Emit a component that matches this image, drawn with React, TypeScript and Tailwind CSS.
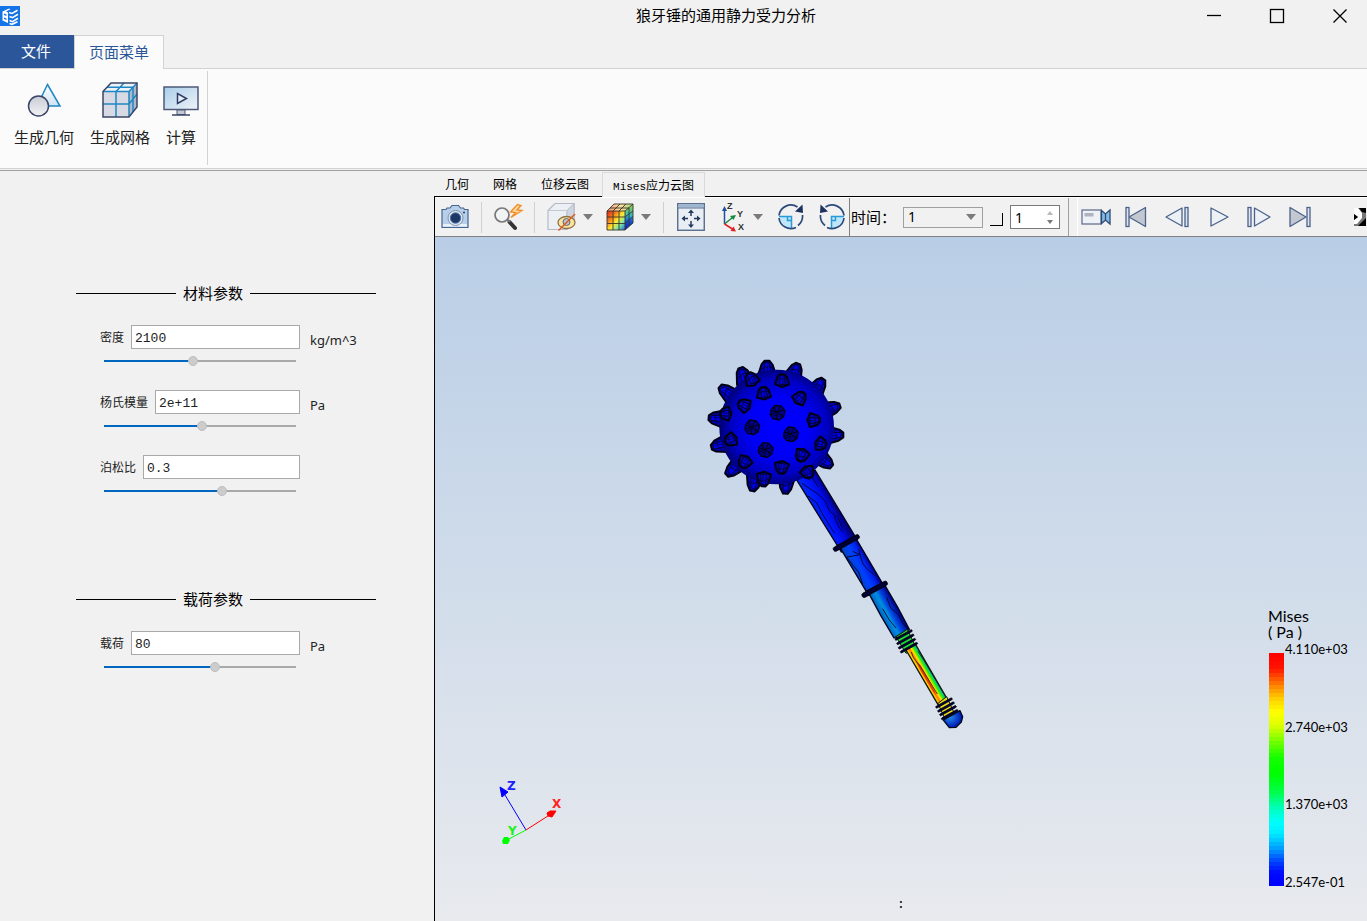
import { useState } from "react";
import type { CSSProperties, ReactNode } from "react";

const SANS = "font-['Noto_Sans','Noto_Sans_CJK_SC',sans-serif]";

type Field = { id: string; label: string; value: string; unit: string; level: number };

const materialFields: Field[] = [
  { id: "density", label: "密度", value: "2100", unit: "kg/m^3", level: 46 },
  { id: "young", label: "杨氏模量", value: "2e+11", unit: "Pa", level: 51 },
  { id: "poisson", label: "泊松比", value: "0.3", unit: "", level: 62 },
];

const loadFields: Field[] = [
  { id: "load", label: "载荷", value: "80", unit: "Pa", level: 58 },
];

// colour stops of the stress map, top (max) to bottom (min)
const stops: [number, number[]][] = [
  [0, [255, 0, 0]],
  [0.06, [255, 20, 0]],
  [0.13, [255, 125, 0]],
  [0.19, [255, 205, 0]],
  [0.25, [255, 255, 0]],
  [0.31, [220, 255, 0]],
  [0.37, [130, 255, 0]],
  [0.45, [20, 255, 0]],
  [0.52, [0, 255, 0]],
  [0.6, [0, 255, 80]],
  [0.67, [0, 255, 190]],
  [0.73, [0, 255, 255]],
  [0.78, [0, 235, 255]],
  [0.85, [0, 150, 255]],
  [0.9, [0, 70, 255]],
  [0.95, [0, 10, 255]],
  [1, [0, 0, 255]],
];

function colorAt(t: number) {
  const i = Math.max(1, stops.findIndex(([p]) => p >= t));
  const [p0, c0] = stops[i - 1];
  const [p1, c1] = stops[i];
  const k = (t - p0) / (p1 - p0);
  return `rgb(${c0.map((c, n) => Math.round(c + (c1[n] - c) * k)).join(",")})`;
}

const bands = Array.from({ length: 58 }, (_, i) => colorAt(i / 57));

function SectionTitle({ children }: { children: ReactNode }) {
  return (
    <h2 className="flex items-center gap-[7px] h-6 text-[15px] leading-6 text-black">
      <span className="w-[100px] h-px bg-black" />
      {children}
      <span className="flex-1 h-px bg-black" />
    </h2>
  );
}

function ParamField({ field }: { field: Field }) {
  const [level, setLevel] = useState(field.level);
  const track: CSSProperties = {
    backgroundImage: `linear-gradient(to right, #0067c0 ${level}%, #a9a9a9 ${level}%)`,
  };

  return (
    <div className="flex items-start gap-[10px] pl-6">
      <div className="w-[200px]">
        <div className="flex items-center gap-[7px] h-6">
          <label htmlFor={field.id} className="pt-[2px] text-xs text-[#222]">
            {field.label}
          </label>
          <input
            id={field.id}
            defaultValue={field.value}
            className="flex-1 min-w-0 h-6 px-[3px] pt-[2px] border border-[#a9a9a9] bg-white font-['Liberation_Mono',monospace] text-[13px] text-[#222] outline-none"
          />
        </div>
        <input
          type="range"
          aria-label={field.label}
          value={level}
          onChange={(e) => setLevel(Number(e.target.value))}
          style={track}
          className="block w-48 h-[10px] mt-[7px] ml-1 appearance-none bg-transparent bg-[length:100%_2px] bg-center bg-no-repeat [&::-webkit-slider-thumb]:appearance-none [&::-webkit-slider-thumb]:size-[10px] [&::-webkit-slider-thumb]:rounded-full [&::-webkit-slider-thumb]:bg-[#cccccc] [&::-webkit-slider-thumb]:border [&::-webkit-slider-thumb]:border-[#bdbdbd]"
        />
      </div>
      <span className="mt-[5px] text-[13px] leading-5 text-[#222]">{field.unit}</span>
    </div>
  );
}

function Logo() {
  return (
    <svg width="20" height="20" viewBox="0 0 20 20">
      <rect width="20" height="20" fill="#1473e6" />
      <path d="M2.500 5.500 9 2.500l1.500.8L6 5.500l2 1v10.500l-5.500-2.500Z" fill="#fff" />
      <path d="m4 7.500 2.500 1v1.500L4 9ZM4 11.500l2.500 1V14L4 13Z" fill="#1473e6" />
      <path d="M9 6.500l3 1 5.500-3.200M9.500 10.500l3 1.200L18 8.300M9.500 14.500l3 1.200 5.500-3.400M9.500 17.500l2.500.8 5.500-2.500" fill="none" stroke="#fff" strokeWidth="1.600" />
    </svg>
  );
}

function GeometryIcon() {
  return (
    <svg width="36" height="36" viewBox="0 0 36 36" className="shrink-0">
      <defs>
        <linearGradient id="geoBlue" x1="0" y1="0" x2="0" y2="1">
          <stop offset="0" stopColor="#fff" />
          <stop offset="1" stopColor="#cfe3f5" />
        </linearGradient>
        <linearGradient id="geoGrey" x1="0" y1="0" x2="0" y2="1">
          <stop offset="0" stopColor="#c9ccd6" />
          <stop offset="1" stopColor="#f2f2f4" />
        </linearGradient>
      </defs>
      <path d="M21.500 2.500 34 24H11Z" fill="url(#geoBlue)" stroke="#1f86c4" strokeWidth="1.500" />
      <circle cx="12.500" cy="24" r="10" fill="url(#geoGrey)" stroke="#3b4568" strokeWidth="1.500" />
    </svg>
  );
}

function MeshIcon() {
  return (
    <svg width="36" height="36" viewBox="0 0 36 36" className="shrink-0">
      <path d="M1 9.500h26V35H1Z" fill="#d7dae2" />
      <path d="M27 9.500 35 1v24l-8 10Z" fill="#aeb9cc" />
      <path d="M1 9.500 9 1h26l-8 8.500Z" fill="#eef3f8" />
      <g fill="none" stroke="#1f86c4" strokeWidth="1.500">
        <path d="M14 35V9.500L22 1M1 22h26l8-10M5 5.200h26V30M27 9.500V35" />
        <path d="M1 9.500h26L35 1" />
      </g>
      <path d="M1 9.500 9 1h26v24l-8 10H1Z" fill="none" stroke="#3b4568" strokeWidth="1.500" />
    </svg>
  );
}

function ComputeIcon() {
  return (
    <svg width="36" height="36" viewBox="0 0 36 36" className="shrink-0">
      <defs>
        <linearGradient id="screen" x1="0" y1="0" x2="1" y2="1">
          <stop offset="0" stopColor="#a9cdea" />
          <stop offset="1" stopColor="#f0f4f8" />
        </linearGradient>
      </defs>
      <rect x="1" y="5" width="34" height="22.500" fill="url(#screen)" stroke="#4d5a78" strokeWidth="1.500" />
      <path d="M14 28h8v4.500h-8Z" fill="#c3c8d2" stroke="#4d5a78" />
      <path d="M9 33h18" stroke="#3b4568" strokeWidth="1.500" />
      <path d="M14.500 11.500v10L23.500 16.500Z" fill="#e5edf5" stroke="#2f3c63" strokeWidth="1.500" />
    </svg>
  );
}

function RibbonButton({ label, width, children }: { label: string; width: string; children: ReactNode }) {
  return (
    <button type="button" className={`flex flex-col items-center ${width}`}>
      {children}
      <span className="mt-[7px] text-[15px] leading-6 whitespace-nowrap">{label}</span>
    </button>
  );
}

function CameraIcon() {
  return (
    <svg width="28" height="26" viewBox="0 0 28 26">
      <path d="M1 5.500h4l1-1.500h3l2-2.500h6.500L19.500 4h3l1 1.500H27v18H1Z" fill="#b7cfe8" stroke="#47658f" strokeWidth="1.200" />
      <path d="M2 20h24v2.500H2Z" fill="#e8f0f8" />
      <circle cx="14.500" cy="14" r="7.500" fill="#dfe8f2" stroke="#8094b0" />
      <circle cx="14.500" cy="14" r="5.200" fill="#1c3866" stroke="#4b74a8" />
      <circle cx="23" cy="8.500" r="1" fill="#24406e" />
    </svg>
  );
}

function ZoomFlashIcon() {
  return (
    <svg width="30" height="28" viewBox="0 0 30 28">
      <path d="m15.500 19 5.500 6" stroke="#333" strokeWidth="4" strokeLinecap="round" />
      <path d="m13 16 3 3" stroke="#777" strokeWidth="2" />
      <circle cx="8" cy="12" r="7" fill="#f2f3f5" stroke="#777" strokeWidth="1.700" />
      <path d="m23.500 1.500-7 7.500 5 .5-4.500 5 11-7-5-.500 4-4.500Z" fill="#ffd9a0" stroke="#f0902c" strokeWidth="1.400" />
    </svg>
  );
}

function HideCubeIcon() {
  return (
    <svg width="29" height="30" viewBox="0 0 29 30">
      <path d="M1 8.500 8 1.500h19v18l-7 8H1Z" fill="#eceff4" stroke="#b4bac6" strokeWidth="1.200" />
      <path d="M20 8.500 27 1.500v18l-7 8Z" fill="#cfd5df" stroke="#b4bac6" />
      <path d="M1 8.500h19v19" fill="none" stroke="#c3c9d4" />
      <ellipse cx="19.500" cy="20.500" rx="8.500" ry="6" fill="#fbe3a2" stroke="#8d7440" strokeWidth="1.300" />
      <circle cx="19.500" cy="20" r="3.500" fill="#b9c3d2" stroke="#666" />
      <path d="M11.500 28.500 28 12" stroke="#e0561f" strokeWidth="1.500" />
    </svg>
  );
}

function ColorCubeIcon() {
  return (
    <svg width="28" height="28" viewBox="0 0 28 28">
      <defs>
        <linearGradient id="cubeFront" x1="0" y1=".1" x2="1" y2="1">
          <stop offset="0" stopColor="#e0301a" />
          <stop offset=".25" stopColor="#f37a1f" />
          <stop offset=".5" stopColor="#ffe92e" />
          <stop offset=".72" stopColor="#7fe8a0" />
          <stop offset="1" stopColor="#1464e0" />
        </linearGradient>
        <linearGradient id="cubeSide" x1="0" y1="0" x2="0" y2="1">
          <stop offset=".1" stopColor="#7fd050" />
          <stop offset=".45" stopColor="#30b8c8" />
          <stop offset=".65" stopColor="#1258e0" />
          <stop offset="1" stopColor="#0818b0" />
        </linearGradient>
        <linearGradient id="cubeTop" x1="0" y1="0" x2="1" y2="0">
          <stop offset="0" stopColor="#f09070" />
          <stop offset=".5" stopColor="#fde0a0" />
          <stop offset="1" stopColor="#a0d880" />
        </linearGradient>
      </defs>
      <path d="M1 8h18v19H1Z" fill="url(#cubeFront)" />
      <path d="m19 8 8-7v19l-8 7Z" fill="url(#cubeSide)" />
      <path d="M1 8 8 1h19l-8 7Z" fill="url(#cubeTop)" />
      <g fill="none" stroke="#3a3428" strokeWidth=".9">
        <path d="M1 8 8 1h19v19l-8 7H1ZM1 8h18l8-7M19 8v19M7 27V8l7-7M13 27V8l7-7M4 5h19v18M1 14h18l8-6M1 20.500h18l8-7" />
      </g>
    </svg>
  );
}

function FitIcon() {
  return (
    <svg width="28" height="28" viewBox="0 0 28 28">
      <rect x=".7" y=".7" width="26.600" height="26.600" fill="#e9eef4" stroke="#5b718f" strokeWidth="1.500" />
      <rect x="1.500" y="1.500" width="25" height="3" fill="#9db6d2" />
      <path d="M1 5h26" stroke="#5b718f" />
      <path d="M14 9v4M14 18v4M6 15.500h5M17 15.500h5" stroke="#24395e" strokeWidth="1.500" />
      <path d="m14 6.500 3 3.500h-6ZM14 25l3-3.500h-6ZM4.500 15.500l3.500-3v6ZM23.500 15.500l-3.500-3v6Z" fill="#24395e" />
    </svg>
  );
}

function AxesIcon() {
  return (
    <svg width="24" height="30" viewBox="0 0 24 30" className="font-['Liberation_Sans',sans-serif] text-[9px] font-bold">
      <path d="M2.500 22V7" stroke="#1f4fa0" strokeWidth="1.500" />
      <path d="m2.500 4 2.500 5H0Z" fill="#1f4fa0" />
      <path d="m2.500 22 8-6.500" stroke="#168a3c" strokeWidth="1.500" />
      <path d="M14 13l-2.500 5-3.500-4Z" fill="#168a3c" />
      <path d="m2.500 22 8 5" stroke="#e02020" strokeWidth="1.500" />
      <path d="m14 29.500-5.500-.5 3-4.500Z" fill="#e02020" />
      <text x="5" y="7" fill="#333">Z</text>
      <text x="15" y="15" fill="#333">Y</text>
      <text x="16" y="28" fill="#333">X</text>
    </svg>
  );
}

function RotateIcon({ flip = false }: { flip?: boolean }) {
  return (
    <svg width="26" height="28" viewBox="0 0 26 28">
      <g transform={flip ? "translate(26 0) scale(-1 1)" : undefined}>
        <path d="M1.500 13.500h12v12Q3 24.500 1.500 13.500Z" fill="#bfe6fb" />
        <path d="M1 13.500h12.500V26M9.500 14v3.500h4" fill="none" stroke="#2a9bd8" strokeWidth="1.500" />
        <path d="M1 12.500A12 12 0 0 1 19.500 4M24.500 12A12 12 0 0 1 20 22.500M18 24.500A12 12 0 0 1 1 15" fill="none" stroke="#2c4a7c" strokeWidth="1.700" />
        <path d="m24.500 1.500.500 8.500-8-1.500Z" fill="#1d325e" />
      </g>
    </svg>
  );
}

function VideoIcon() {
  return (
    <svg width="30" height="20" viewBox="0 0 30 20">
      <rect x="1" y="3" width="19" height="14" fill="#eef1f5" stroke="#5a6a88" strokeWidth="1.200" />
      <rect x="3.500" y="6" width="9" height="3.500" fill="#aeb4be" />
      <path d="m20.500 3.500 4 3.500 4.500-4v14l-4.500-4-4 3.500Z" fill="#7fbde6" stroke="#2e4a74" strokeWidth="1.300" />
      <path d="M24.500 7v6" stroke="#2e4a74" strokeWidth="1.300" />
    </svg>
  );
}

function PlayIcon({ d, bar, solid = false }: { d: string; bar?: number; solid?: boolean }) {
  return (
    <svg width="24" height="22" viewBox="0 0 24 22">
      <path d={d} fill={solid ? "#c3c7cf" : "#edf1f6"} stroke="#4a628c" strokeWidth="1.300" strokeLinejoin="round" />
      {bar !== undefined && (
        <rect x={bar} y="1.500" width="3" height="19" fill="#dfe4eb" stroke="#4a628c" strokeWidth="1.300" />
      )}
    </svg>
  );
}

function Caret() {
  return (
    <svg width="10" height="6" viewBox="0 0 10 6" className="ml-[7px]">
      <path d="M0 0h10L5 6Z" fill="#7b7b7b" />
    </svg>
  );
}

function Tool({ label, className = "", children }: { label: string; className?: string; children: ReactNode }) {
  return (
    <button type="button" aria-label={label} className={`flex items-center shrink-0 ${className}`}>
      {children}
    </button>
  );
}

const Divider = () => <span className="w-px h-[31px] mx-3 bg-[#d0d0d0]" />;

function Toolbar() {
  return (
    <div className="flex h-10 border-t border-white border-b border-b-[#808080] bg-[#f1f1f1]">
      <div className="flex items-center shrink-0 pl-[6px] pr-1 border-r border-[#808080]">
        <Tool label="截图"><CameraIcon /></Tool>
        <Divider />
        <Tool label="缩放"><ZoomFlashIcon /></Tool>
        <span className="w-px h-[31px] mr-3 ml-[10px] bg-[#d0d0d0]" />
        <Tool label="隐藏"><HideCubeIcon /><Caret /></Tool>
        <Tool label="云图" className="ml-[13px]"><ColorCubeIcon /><Caret /></Tool>
        <Divider />
        <Tool label="适应窗口" className="ml-px"><FitIcon /></Tool>
        <Tool label="视图方向" className="ml-[17px]"><AxesIcon /><Caret /></Tool>
        <Tool label="顺时针旋转" className="ml-[15px]"><RotateIcon /></Tool>
        <Tool label="逆时针旋转" className="ml-[15px]"><RotateIcon flip /></Tool>
      </div>
      <div className="flex items-center shrink-0 pl-px pr-2 border-r border-[#a0a0a0]">
        <label htmlFor="time" className="w-[52px] text-[15px] whitespace-nowrap text-black">
          时间：
        </label>
        <div className="relative w-20">
          <select id="time" className="block w-full h-[21px] px-1 appearance-none border border-[#a0a0a0] bg-[#f1f1f1] text-sm leading-4 text-black">
            <option>1</option>
          </select>
          <svg width="10" height="6" viewBox="0 0 10 6" className="absolute right-[7px] top-[7px] pointer-events-none">
            <path d="M0 0h10L5 6Z" fill="#7b7b7b" />
          </svg>
        </div>
        <button type="button" aria-label="应用" className="size-[13px] mx-[7px] mt-1 border-r border-b border-black bg-[#f1f1f1]" />
        <div className="relative w-[50px]">
          <input aria-label="帧" defaultValue="1" className="block w-full h-6 px-1 border border-[#7a7a7a] bg-white text-sm text-black outline-none" />
          <button type="button" aria-label="增加" className="absolute right-[7px] top-[6px]">
            <svg width="6" height="4" viewBox="0 0 6 4"><path d="M0 4h6L3 0Z" fill="#b8b8b8" /></svg>
          </button>
          <button type="button" aria-label="减少" className="absolute right-[7px] bottom-[5px]">
            <svg width="6" height="4" viewBox="0 0 6 4"><path d="M0 0h6L3 4Z" fill="#777" /></svg>
          </button>
        </div>
      </div>
      <div className="flex flex-1 items-center min-w-0 ml-2 pl-[3px] gap-[17px] border-l border-white overflow-hidden">
        <Tool label="录制"><VideoIcon /></Tool>
        <Tool label="首帧" className="-ml-1"><PlayIcon d="M21.500 1.500v19L5 11Z" bar={2} solid /></Tool>
        <Tool label="上一帧"><PlayIcon d="M17 2v18L1 11Z" bar={20} /></Tool>
        <Tool label="播放"><PlayIcon d="M5 2v18l17-9Z" /></Tool>
        <Tool label="下一帧"><PlayIcon d="M7.500 2v18l15.500-9Z" bar={1} /></Tool>
        <Tool label="末帧"><PlayIcon d="M2 1.500v19L18 11Z" bar={19} solid /></Tool>
        <Tool label="更多" className="ml-auto mr-px">
          <svg width="12" height="18" viewBox="0 0 12 18">
            <rect width="12" height="18" fill="#777" />
            <path d="M0 0h4l4 5v5l-5 6H0v-4l4-3-4-3Z" fill="#fff" />
            <path d="M5 0h7v5L8 4ZM0 6l4 3-4 3ZM12 10v8H4Z" fill="#000" />
          </svg>
        </Tool>
      </div>
    </div>
  );
}

// spikes seen from the side: base x, base y, tip x, tip y
const sideSpikes = [
  [231, 88, 231, 47], [308, 96, 324, 56], [166, 112, 152, 68], [372, 144, 400, 102],
  [130, 158, 90, 124], [398, 198, 450, 182], [100, 222, 56, 218], [412, 270, 460, 270],
  [108, 296, 64, 307], [382, 330, 425, 365], [156, 348, 110, 390], [196, 386, 187, 438],
  [291, 390, 286, 446],
];

// spikes leaning towards the viewer
const slantSpikes = [
  [190, 114, 176, 84], [276, 118, 277, 88], [116, 206, 90, 206], [222, 388, 220, 424],
  [348, 372, 362, 398], [276, 356, 273, 386], [132, 280, 106, 292], [384, 294, 408, 302],
  [170, 342, 154, 366], [222, 156, 220, 126], [322, 168, 342, 144], [172, 186, 146, 172],
  [360, 225, 390, 226], [340, 320, 328, 348],
];

const frontSpikes = [[263, 203], [187, 247], [303, 268], [227, 315]];

function Spike({ p, base, tip }: { p: number[]; base: number; tip: number }) {
  const [bx, by, tx, ty] = p;
  const len = Math.hypot(tx - bx, ty - by);
  const ux = (tx - bx) / len;
  const uy = (ty - by) / len;
  // point at distance `along` from the base and `side` off the axis
  const at = (along: number, side: number) => `${bx + ux * along - uy * side},${by + uy * along + ux * side}`;
  return (
    <g stroke="#000010" strokeLinejoin="round">
      <polygon
        points={[at(0, base), at(len * 0.7, tip + 3), at(len, tip / 2), at(len, -tip / 2), at(len * 0.75, -tip - 2), at(0, -base), at(-8, 0)].join(" ")}
        fill="#0000b8"
        strokeWidth="6"
      />
      <path d={`M${at(0, base / 2)} L${at(len * 0.8, tip / 2)} L${at(len * 0.9, -tip / 2)} L${at(0, -base / 3)} Z`} fill="#0000ec" strokeWidth="2.500" />
      <path d={`M${at(len / 2, base * 0.7)} L${at(len * 0.6, 2)} L${at(len * 0.4, -base * 0.6)} M${at(-4, 2)} L${at(len * 0.6, 2)}`} fill="none" strokeWidth="2" />
    </g>
  );
}

function Ring({ x, y, rx, ry }: { x: number; y: number; rx: number; ry: number }) {
  return (
    <g transform={`translate(${x} ${y}) rotate(-29)`}>
      <rect x={-rx} y={-ry} width={rx * 2} height={ry * 2} rx={ry} fill="#000028" stroke="#000" strokeWidth="2" />
      <path d={`M${-rx + 4} 1H${rx - 4}`} stroke="#00007c" strokeWidth="2" strokeDasharray="4 4" />
    </g>
  );
}

function Mace() {
  return (
    <svg width="290" height="395" viewBox="0 0 870 1185" className="absolute left-[29%] top-[108px] -ml-[15px]">
      <defs>
        <radialGradient id="ball" cx=".52" cy=".5" r=".52">
          <stop offset="0" stopColor="#0000ff" />
          <stop offset=".5" stopColor="#0000f6" />
          <stop offset=".8" stopColor="#0000c4" />
          <stop offset="1" stopColor="#000070" />
        </radialGradient>
        <linearGradient id="shaftA" gradientUnits="userSpaceOnUse" x1="62" y1="122" x2="125" y2="88">
          <stop offset="0" stopColor="#0030d0" />
          <stop offset=".4" stopColor="#0018ff" />
          <stop offset=".75" stopColor="#0008e0" />
          <stop offset="1" stopColor="#000080" />
        </linearGradient>
        <linearGradient id="shaftB" gradientUnits="userSpaceOnUse" x1="192" y1="302" x2="240" y2="276">
          <stop offset="0" stopColor="#0044c4" />
          <stop offset=".4" stopColor="#0040ff" />
          <stop offset=".75" stopColor="#0020e8" />
          <stop offset="1" stopColor="#000088" />
        </linearGradient>
        <linearGradient id="shaftC" gradientUnits="userSpaceOnUse" x1="275" y1="440" x2="322" y2="414">
          <stop offset="0" stopColor="#0060c0" />
          <stop offset=".35" stopColor="#0090e0" />
          <stop offset=".6" stopColor="#0044e0" />
          <stop offset="1" stopColor="#000088" />
        </linearGradient>
        <linearGradient id="grip" gradientUnits="userSpaceOnUse" x1="394" y1="622" x2="425" y2="604">
          <stop offset="0" stopColor="#d8a000" />
          <stop offset=".15" stopColor="#ffd400" />
          <stop offset=".32" stopColor="#ff7000" />
          <stop offset=".5" stopColor="#ffe400" />
          <stop offset=".68" stopColor="#30f000" />
          <stop offset=".85" stopColor="#00c890" />
          <stop offset="1" stopColor="#006080" />
        </linearGradient>
        <radialGradient id="cap" cx=".35" cy=".4" r=".6">
          <stop offset="0" stopColor="#2088f0" />
          <stop offset="1" stopColor="#0018b0" />
        </radialGradient>
      </defs>

      <g transform="translate(300 375)" strokeLinejoin="round">
        <path d="M20 30 75 0 202 210 154 246Z" fill="url(#shaftA)" stroke="#000020" strokeWidth="4" />
        <path d="M146 226 196 202 282 348 236 376Z" fill="url(#shaftB)" stroke="#000020" strokeWidth="4" />
        <path d="M232 362 280 338 322 410 358 478 312 504 272 436Z" fill="url(#shaftC)" stroke="#000020" strokeWidth="4" />
        <g fill="none" stroke="#000020" strokeWidth="2.500">
          <path d="m36 40 48 32 22 22 12 28 26 22 14 32M54 78l26 20 22 42 32 50M62 14l22 36M132 138l14 32 12 16" />
          <path d="M168 262l42-8-22-10M210 254l-4-16M210 254l8 26 14 18 22 18M170 262l24 30 12 14 12 36" />
          <path d="m290 382 12 32 24 20 10 22 18 22M278 416l20 34 20 24" />
        </g>
        <Ring x={169} y={219} rx={44} ry={7} />
        <Ring x={254} y={358} rx={43} ry={7} />

        <path d="m318 500 34-22 26 54-30 18Z" fill="#20d840" stroke="#101808" strokeWidth="3" />
        <path d="m348 540 28-18 94 162-26 20Z" fill="url(#grip)" stroke="#101808" strokeWidth="4" />
        <path d="m378 574 14 12 42 76 4 14-8-10-38-64Z" fill="#e82800" opacity=".8" />
        <path d="m364 546 6 16 28 38 44 72M384 544l18 28 34 56 26 44" fill="none" stroke="#182010" strokeWidth="2.500" />
        <path d="m444 700 26-20 24 52-28 18Z" fill="#e8d820" stroke="#101808" strokeWidth="3" />
        {[[341, 495], [346, 508], [351, 521], [357, 533]].map(([x, y]) => (
          <Ring key={y} x={x} y={y} rx={29} ry={3} />
        ))}
        <path d="m460 750 50-28 8 18-4 16-16 16-20 1Z" fill="url(#cap)" stroke="#000820" strokeWidth="4" />
        {[[462, 699], [468, 711], [474, 722], [479, 734]].map(([x, y]) => (
          <Ring key={y} x={x} y={y} rx={28} ry={3} />
        ))}
      </g>

      {sideSpikes.map((p) => (
        <Spike key={p.join()} p={p} base={26} tip={14} />
      ))}
      <circle cx="260" cy="246" r="172" fill="url(#ball)" />
      {slantSpikes.map((p) => (
        <Spike key={p.join()} p={p} base={21} tip={12} />
      ))}
      {frontSpikes.map(([x, y]) => (
        <g key={x} transform={`translate(${x} ${y})`} stroke="#000010" strokeLinejoin="round">
          <path d="m-20-8 12-14 18 2 12 14-4 18-14 10-18-4-8-12Z" fill="#00008c" strokeWidth="4" />
          <path d="M-18-6 0-2 8-20M0-2l20-6M0-2l-4 22M0-2l14 16M-20 6 0-2M-10-18l4 14M8 4l8 6M-12 10l8-4" fill="none" strokeWidth="3" />
        </g>
      ))}
    </svg>
  );
}

function AxisTriad() {
  return (
    <svg
      width="80"
      height="80"
      viewBox="0 0 80 80"
      className="absolute left-[60px] bottom-[66px] font-['DejaVu_Sans',sans-serif] text-[12px] font-bold"
    >
      <path d="M31 55 7 15" stroke="#0000ff" />
      <path d="m5 12 8 5-6 5Z" fill="#0000ff" stroke="#0000ff" />
      <path d="m31 55 25-16" stroke="#ff0000" />
      <path d="m61 36-4 6-4-1-1-3 3-2Z" fill="#ff0000" stroke="#ff0000" />
      <path d="M31 55 12 65" stroke="#00ff00" />
      <path d="m7 66 2-4 4 0 2 3-2 4-5 0Z" fill="#00ff00" />
      <text x="12" y="15" fill="#2020ff">Z</text>
      <text x="57" y="33" fill="#ff2020">X</text>
      <text x="13" y="60" fill="#20f020">Y</text>
    </svg>
  );
}

function Legend() {
  return (
    <div className="absolute right-4 bottom-[35px] w-[84px] font-['Lato',sans-serif] text-black">
      <p className="pl-px text-base leading-4 whitespace-pre-line">{"Mises\n( Pa )"}</p>
      <div className="flex mt-[13px]">
        <div className="flex flex-col w-[15px] h-[233px] ml-[2px]">
          {bands.map((backgroundColor, i) => (
            <span key={i} className="flex-1" style={{ backgroundColor }} />
          ))}
        </div>
        <div className="flex flex-col justify-between -mt-3 -mb-1 ml-px text-[13px] leading-4">
          <span>4.110e+03</span>
          <span>2.740e+03</span>
          <span>1.370e+03</span>
          <span>2.547e-01</span>
        </div>
      </div>
    </div>
  );
}

export default function App() {
  return (
    <div className={`flex flex-col min-h-screen bg-[#f1f1f1] text-[#222] ${SANS}`}>
      <header className="flex items-center h-[35px]">
        <div className="w-5 mb-[3px]">
          <Logo />
        </div>
        <h1 className="flex-1 pl-[226px] pb-1 text-[15px] text-center text-black">狼牙锤的通用静力受力分析</h1>
        <div className="flex gap-[47px] pr-[19px] pb-1 text-black">
          <button type="button" aria-label="最小化">
            <svg width="16" height="16" viewBox="0 0 16 16"><path d="M1 7.500h14" stroke="currentColor" strokeWidth="1.300" /></svg>
          </button>
          <button type="button" aria-label="最大化">
            <svg width="16" height="16" viewBox="0 0 16 16"><rect x="1.500" y="1.500" width="13" height="13" fill="none" stroke="currentColor" strokeWidth="1.300" /></svg>
          </button>
          <button type="button" aria-label="关闭">
            <svg width="16" height="16" viewBox="0 0 16 16"><path d="m1.500 1.500 13 13M14.500 1.500l-13 13" stroke="currentColor" strokeWidth="1.300" /></svg>
          </button>
        </div>
      </header>

      <nav className="flex h-[34px] border-b border-[#d2d2d2] text-[15px]">
        <button type="button" className="w-[74px] h-[33px] pr-[2px] bg-[#2b579a] text-white">文件</button>
        <button type="button" className="w-[90px] h-[34px] border border-b-0 border-[#d2d2d2] bg-[#fbfbfb] text-[#2b579a]">
          页面菜单
        </button>
      </nav>

      <div className="h-[102px] border-b border-[#a0a0a0]">
        <div className="h-[100px] pt-[2px] border-b border-[#d2d2d2] bg-[#fbfbfb]">
          <div className="flex items-start gap-4 w-52 h-[94px] pt-[11px] pl-[14px] border-r border-[#d2d2d2]">
            <RibbonButton label="生成几何" width="w-[60px]"><GeometryIcon /></RibbonButton>
            <RibbonButton label="生成网格" width="w-[60px]"><MeshIcon /></RibbonButton>
            <RibbonButton label="计算" width="w-[30px]"><ComputeIcon /></RibbonButton>
          </div>
        </div>
      </div>

      <main className="flex flex-1">
        <form className="w-[434px] shrink-0 pt-[110px] pl-[76px] pr-[58px]">
          <section>
            <SectionTitle>材料参数</SectionTitle>
            <div className="flex flex-col gap-6 mt-5">
              {materialFields.map((field) => (
                <ParamField key={field.id} field={field} />
              ))}
            </div>
          </section>
          <section className="mt-[91px]">
            <SectionTitle>载荷参数</SectionTitle>
            <div className="flex flex-col gap-6 mt-5">
              {loadFields.map((field) => (
                <ParamField key={field.id} field={field} />
              ))}
            </div>
          </section>
        </form>

        <section className="flex flex-col flex-1 min-w-0">
          <div className="flex items-end h-[26px] pl-[11px] border-b border-black text-xs leading-[22px] text-black">
            <button type="button" className="mr-6">几何</button>
            <button type="button" className="mr-6">网格</button>
            <button type="button" className="mr-[13px]">位移云图</button>
            <button type="button" className="w-[103px] h-[25px] -mb-px pt-[2px] border border-b-0 border-[#dadada] bg-[#f1f1f1]">
              <span className="font-['Liberation_Mono',monospace] text-[11px]">Mises</span>应力云图
            </button>
          </div>
          <div className="flex flex-col flex-1 border-l border-black">
            <Toolbar />
            <div className="relative flex-1 min-h-[684px] overflow-hidden bg-linear-to-b from-[#b9cee6] to-[#e8eaee]">
              <Mace />
              <AxisTriad />
              <Legend />
              <p className="absolute inset-x-0 bottom-2 text-center font-['Liberation_Mono',monospace] text-[13px] leading-4 text-black">:</p>
            </div>
          </div>
        </section>
      </main>
    </div>
  );
}
